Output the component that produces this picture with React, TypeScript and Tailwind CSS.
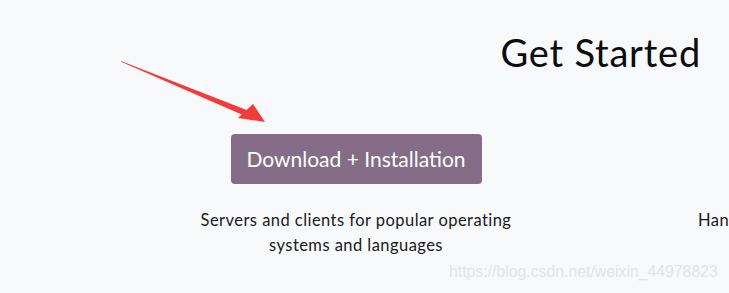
import React from "react";

export default function App() {
  return (
    <div
      className="relative w-[729px] h-[293px] overflow-hidden bg-[#f8f9fb] text-[#111]"
      style={{ fontFamily: "Lato, 'Open Sans', sans-serif" }}
    >
      <div className="flex justify-end pr-[28px] pt-[28px]">
        <h1 className="text-[38px] leading-[48px] font-normal tracking-[0.8px] text-[#0c0c0c]">Get Started</h1>
      </div>
      <div className="flex mt-[58px]">
        <div className="w-[340px] ml-[186px] flex flex-col items-center shrink-0">
          <button className="w-[251px] h-[50px] rounded-[4px] bg-[#856c87] text-white text-[21px]">
            Download + Installation
          </button>
          <p className="mt-[24px] text-[16.5px] leading-[25px] tracking-[0.45px] text-center text-[#1a1a1a]">
            Servers and clients for popular operating systems and languages
          </p>
        </div>
        <div className="ml-[172px] shrink-0 w-[300px] pt-[74px]">
          <p className="text-[16.5px] leading-[25px] tracking-[0.45px] text-[#1a1a1a] whitespace-nowrap">Handles everything</p>
        </div>
      </div>
      <div
        className="absolute left-[449px] top-[262px] text-[15.8px] leading-[20px] text-[#e2e4e8]"
        style={{ fontFamily: "'Liberation Sans', Arial, sans-serif" }}
      >
        https://blog.csdn.net/weixin_44978823
      </div>
      <svg className="absolute left-0 top-0" width="729" height="293" viewBox="0 0 729 293">
        <polygon points="121,61 248,110.5 245,116 121,61.8" fill="#f23c3c" />
        <polygon points="265,122 238,118 253,104" fill="#f23c3c" />
      </svg>
    </div>
  );
}
